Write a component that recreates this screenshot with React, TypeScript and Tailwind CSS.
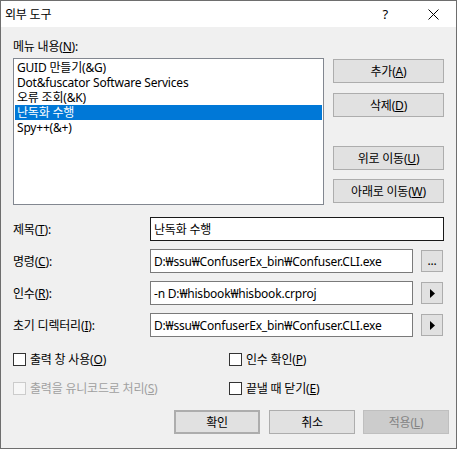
import React from "react";

const font = { fontFamily: '"Noto Sans", "Noto Sans CJK KR", sans-serif' };

function Btn({ children, className = "" }: { children: React.ReactNode; className?: string }) {
  return (
    <div
      className={`shrink-0 flex items-center justify-center bg-[#e1e1e1] border border-[#adadad] text-[12px] leading-[15px] text-black ${className}`}
    >
      {children}
    </div>
  );
}

function Arrow() {
  return (
    <svg width="5" height="9" viewBox="0 0 5 9">
      <path d="M0 0 L5 4.5 L0 9 Z" fill="#000" />
    </svg>
  );
}

function Check({ label, disabled = false }: { label: React.ReactNode; disabled?: boolean }) {
  return (
    <div className="flex items-center h-[16px]">
      <div
        className={`w-[13px] h-[13px] border ${disabled ? "border-[#cccccc] bg-[#f7f7f7]" : "border-[#333333] bg-white"}`}
      />
      <span className={`ml-[4px] text-[12px] leading-[15px] ${disabled ? "text-[#a0a0a0]" : "text-black"}`}>{label}</span>
    </div>
  );
}

const items = ["GUID 만들기(&G)", "Dot&fuscator Software Services", "오류 조회(&K)", "난독화 수행", "Spy++(&+)"];

export default function App() {
  return (
    <div style={font} className="w-[457px] h-[449px] border border-[#6e6e6e] flex flex-col bg-[#f0f0f0] text-black tracking-[-0.2px]">
      {/* Title bar */}
      <div className="h-[26px] bg-white flex items-center pl-[4px] shrink-0">
        <span className="text-[12px] leading-[15px]">외부 도구</span>
        <span className="ml-auto mr-[40px] text-[13px] leading-[15px]">?</span>
        <svg width="11" height="11" viewBox="0 0 11 11" className="mr-[17px]">
          <path d="M0.5 0.5 L10.5 10.5 M10.5 0.5 L0.5 10.5" stroke="#000" strokeWidth="1" />
        </svg>
      </div>

      <div className="flex-1 px-[12px] pt-[12px]">
        <div className="text-[12px] leading-[15px]">
          메뉴 내용(<u>N</u>):
        </div>

        {/* list + side buttons */}
        <div className="flex mt-[4px]">
          <div className="w-[311px] h-[147px] border border-[#828790] bg-white p-[1px] shrink-0">
            {items.map((t, i) => (
              <div
                key={t}
                className={`h-[15px] leading-[15px] text-[12px] pl-[2px] whitespace-nowrap overflow-hidden ${
                  i === 3 ? "bg-[#0078d7] text-white" : ""
                }`}
              >
                {t}
              </div>
            ))}
          </div>
          <div className="ml-[9px] flex flex-col">
            <Btn className="w-[111px] h-[24px] mt-[1px]">
              추가(<u>A</u>)
            </Btn>
            <Btn className="w-[111px] h-[24px] mt-[10px]">
              삭제(<u>D</u>)
            </Btn>
            <Btn className="w-[111px] h-[24px] mt-[29px]">
              위로 이동(<u>U</u>)
            </Btn>
            <Btn className="w-[111px] h-[24px] mt-[9px]">
              아래로 이동(<u>W</u>)
            </Btn>
          </div>
        </div>

        {/* form rows */}
        <div className="mt-[12px] flex flex-col gap-[8px]">
          <div className="flex items-center h-[24px]">
            <span className="w-[137px] shrink-0 text-[12px] leading-[15px]">
              제목(<u>T</u>):
            </span>
            <div className="w-[294px] h-[24px] border border-[#1a1a1a] bg-white flex items-center px-[3px] text-[12px] leading-[15px]">
              난독화 수행
            </div>
          </div>
          <div className="flex items-center h-[24px]">
            <span className="w-[137px] shrink-0 text-[12px] leading-[15px]">
              명령(<u>C</u>):
            </span>
            <div className="w-[263px] h-[24px] border border-[#7a7a7a] bg-white flex items-center px-[3px] text-[12px] leading-[15px] whitespace-nowrap">
              D:₩ssu₩ConfuserEx_bin₩Confuser.CLI.exe
            </div>
            <Btn className="w-[22px] h-[22px] ml-[8px] items-end pb-[3px]">...</Btn>
          </div>
          <div className="flex items-center h-[24px]">
            <span className="w-[137px] shrink-0 text-[12px] leading-[15px]">
              인수(<u>R</u>):
            </span>
            <div className="w-[263px] h-[24px] border border-[#7a7a7a] bg-white flex items-center px-[3px] text-[12px] leading-[15px] whitespace-nowrap">
              -n D:₩hisbook₩hisbook.crproj
            </div>
            <Btn className="w-[22px] h-[22px] ml-[8px]">
              <Arrow />
            </Btn>
          </div>
          <div className="flex items-center h-[24px]">
            <span className="w-[137px] shrink-0 text-[12px] leading-[15px]">
              초기 디렉터리(<u>I</u>):
            </span>
            <div className="w-[263px] h-[24px] border border-[#7a7a7a] bg-white flex items-center px-[3px] text-[12px] leading-[15px] whitespace-nowrap">
              D:₩ssu₩ConfuserEx_bin₩Confuser.CLI.exe
            </div>
            <Btn className="w-[22px] h-[22px] ml-[8px]">
              <Arrow />
            </Btn>
          </div>
        </div>

        {/* checkboxes */}
        <div className="mt-[14px] grid grid-cols-[216px_1fr] gap-y-[13px]">
          <Check label={<>출력 창 사용(<u>O</u>)</>} />
          <Check label={<>인수 확인(<u>P</u>)</>} />
          <Check disabled label={<>출력을 유니코드로 처리(<u>S</u>)</>} />
          <Check label={<>끝낼 때 닫기(<u>E</u>)</>} />
        </div>

        {/* bottom buttons */}
        <div className="mt-[14px] flex">
          <Btn className="w-[86px] h-[24px] ml-[161px] border-2 border-[#0078d7]">확인</Btn>
          <Btn className="w-[86px] h-[24px] ml-[9px]">취소</Btn>
          <div className="shrink-0 w-[86px] h-[24px] ml-[8px] flex items-center justify-center bg-[#cccccc] border border-[#bfbfbf] text-[12px] leading-[15px] text-[#838383]">
            적용(<u>L</u>)
          </div>
        </div>
      </div>
    </div>
  );
}
